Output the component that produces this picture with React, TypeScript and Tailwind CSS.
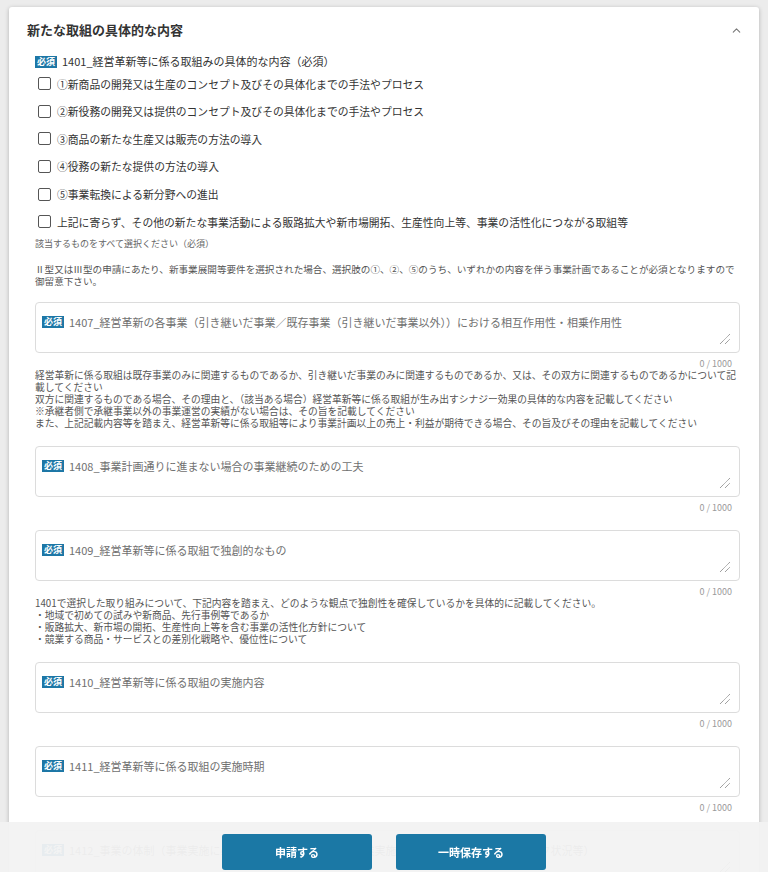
import { ChevronUp } from 'lucide-react'

const Badge = () => (
  <span className="inline-flex items-center justify-center w-[22px] h-[12px] bg-[#1d77a6] text-white text-[9px] font-bold leading-none mr-[5px] shrink-0">
    必須
  </span>
)

const Grip = () => (
  <svg className="absolute right-[8px] bottom-[7px]" width="12" height="12" viewBox="0 0 12 12">
    <line x1="1" y1="11" x2="11" y2="1" stroke="#555" strokeWidth="0.8" strokeDasharray="1 0.6" />
    <line x1="6" y1="11" x2="11" y2="6" stroke="#555" strokeWidth="0.8" strokeDasharray="1 0.6" />
  </svg>
)

type Field = { label: string; notes?: string[] }

const options = [
  '①新商品の開発又は生産のコンセプト及びその具体化までの手法やプロセス',
  '②新役務の開発又は提供のコンセプト及びその具体化までの手法やプロセス',
  '③商品の新たな生産又は販売の方法の導入',
  '④役務の新たな提供の方法の導入',
  '⑤事業転換による新分野への進出',
  '上記に寄らず、その他の新たな事業活動による販路拡大や新市場開拓、生産性向上等、事業の活性化につながる取組等',
]

const fields: Field[] = [
  {
    label: '1407_経営革新の各事業（引き継いだ事業／既存事業（引き継いだ事業以外））における相互作用性・相乗作用性',
    notes: [
      '経営革新に係る取組は既存事業のみに関連するものであるか、引き継いだ事業のみに関連するものであるか、又は、その双方に関連するものであるかについて記載してください',
      '双方に関連するものである場合、その理由と、（該当ある場合）経営革新等に係る取組が生み出すシナジー効果の具体的な内容を記載してください',
      '※承継者側で承継事業以外の事業運営の実績がない場合は、その旨を記載してください',
      'また、上記記載内容等を踏まえ、経営革新等に係る取組等により事業計画以上の売上・利益が期待できる場合、その旨及びその理由を記載してください',
    ],
  },
  { label: '1408_事業計画通りに進まない場合の事業継続のための工夫' },
  {
    label: '1409_経営革新等に係る取組で独創的なもの',
    notes: [
      '1401で選択した取り組みについて、下記内容を踏まえ、どのような観点で独創性を確保しているかを具体的に記載してください。',
      '・地域で初めての試みや新商品、先行事例等であるか',
      '・販路拡大、新市場の開拓、生産性向上等を含む事業の活性化方針について',
      '・競業する商品・サービスとの差別化戦略や、優位性について',
    ],
  },
  { label: '1410_経営革新等に係る取組の実施内容' },
  { label: '1411_経営革新等に係る取組の実施時期' },
  { label: '1412_事業の体制（事業実施に必要な人員や組織体制等の事業実施体制及び外部とのネットワーク状況等）' },
]

const TextField = ({ field }: { field: Field }) => (
  <div className="mb-[17px]">
    <div className="relative h-[51px] border border-[#dcdcdc] rounded-[4px] bg-white pl-[6px] pt-[10px]">
      <div className="flex items-center text-[11px] leading-[18px] text-[#707070]">
        <Badge />
        <span className="truncate">{field.label}</span>
      </div>
      <Grip />
    </div>
    <div className="h-[16px] pt-[5px] pr-[8px] text-right text-[9px] leading-[12px] text-[#9a9a9a]">0 / 1000</div>
    {field.notes && (
      <div className="text-[9.75px] leading-[12px] text-[#555]">
        {field.notes.map((n) => (
          <div key={n}>{n}</div>
        ))}
      </div>
    )}
  </div>
)

export default function App() {
  return (
    <div
      className="min-h-screen bg-[#ececec] pt-[7px] pl-[9px] pb-[80px]"
      style={{ fontFamily: '"Noto Sans CJK JP", "Noto Sans", sans-serif' }}
    >
      <div className="w-[750px] bg-white rounded-[3px] shadow-[0_1px_4px_rgba(0,0,0,0.25)]">
        <div className="h-[46px] flex items-center justify-between pl-[18px] pr-[16px]">
          <h2 className="text-[13px] font-bold text-[#333]">新たな取組の具体的な内容</h2>
          <ChevronUp size={13} strokeWidth={2} className="text-[#777]" />
        </div>
        <div className="ml-[26px] mr-[19px]">
          <div className="h-[17px] flex items-center text-[11px] text-[#333]">
            <Badge />
            <span>1401_経営革新等に係る取組みの具体的な内容（必須）</span>
          </div>
          {options.map((o) => (
            <div key={o} className="h-[27.6px] flex items-center pl-[3px]">
              <span className="w-[13px] h-[13px] border border-[#555] rounded-[2px] bg-white mr-[6px] shrink-0" />
              <span className="text-[10.8px] text-[#333] whitespace-nowrap">{o}</span>
            </div>
          ))}
          <div className="h-[16px] leading-[16px] text-[9px] text-[#666]">該当するものをすべて選択ください（必須）</div>
          <div className="mt-[11px] mb-[15px] text-[9.6px] leading-[12px] text-[#555]">
            Ⅱ型又はⅢ型の申請にあたり、新事業展開等要件を選択された場合、選択肢の①、②、⑤のうち、いずれかの内容を伴う事業計画であることが必須となりますので御留意下さい。
          </div>
          {fields.map((f) => (
            <TextField key={f.label} field={f} />
          ))}
        </div>
      </div>
      <div className="fixed left-0 right-0 bottom-0 h-[50px] bg-[#f2f2f2]/95 flex justify-center gap-6 pt-[12px]">
        <button className="w-[150px] h-[36px] rounded-[3px] bg-[#1b78a5] text-white text-[11px] font-bold">申請する</button>
        <button className="w-[150px] h-[36px] rounded-[3px] bg-[#1b78a5] text-white text-[11px] font-bold">一時保存する</button>
      </div>
    </div>
  )
}
